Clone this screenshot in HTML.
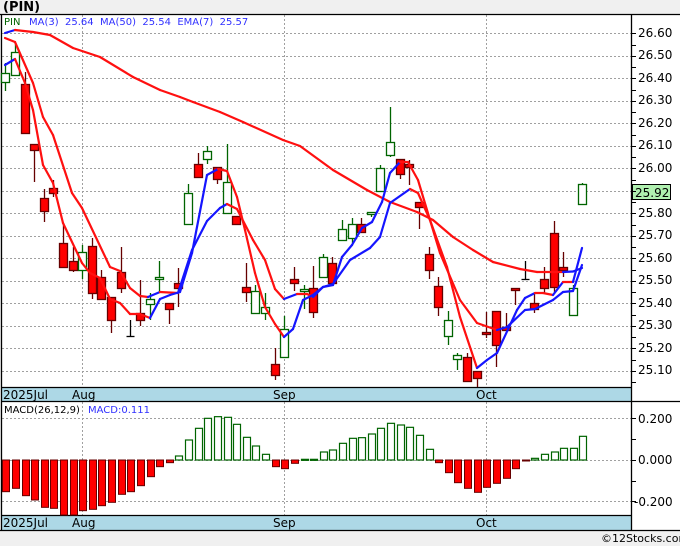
<!DOCTYPE html>
<html><head><meta charset="utf-8">
<style>
html,body{margin:0;padding:0;background:#f0f0f0;width:680px;height:546px;overflow:hidden}
svg{display:block}
text{font-family:"DejaVu Sans","Liberation Sans",sans-serif}
</style></head><body>
<svg id="s" width="680" height="546" xmlns="http://www.w3.org/2000/svg">
<rect x="0" y="0" width="680" height="546" fill="#f0f0f0"/>
<text x="3" y="11" font-size="13" font-weight="bold" fill="#000" font-family="Liberation Sans,sans-serif">(PIN)</text>
<rect x="1" y="14" width="679" height="516" fill="#fff"/>
<g id="grid" stroke="#a0a0a0" stroke-width="1" stroke-dasharray="2,2"></g>
<rect x="1" y="387" width="631" height="14" fill="#add8e6"/>
<rect x="1" y="515" width="631" height="15" fill="#add8e6"/>
<g stroke="#000" stroke-width="1.3">
<line x1="0" y1="14.5" x2="680" y2="14.5"/>
<line x1="1.5" y1="14" x2="1.5" y2="530"/>
<line x1="631.5" y1="14" x2="631.5" y2="530"/>
<line x1="1" y1="387.5" x2="632" y2="387.5"/>
<line x1="1" y1="401.5" x2="680" y2="401.5"/>
<line x1="1" y1="515.5" x2="632" y2="515.5"/>
<line x1="0" y1="530.5" x2="680" y2="530.5"/>
</g>
<g id="plot"></g>
<text x="4" y="25" font-size="10" fill="#006400">PIN</text>
<text x="29" y="25" font-size="10" fill="#3030ff" xml:space="preserve">MA(3)  25.64  MA(50)  25.54  EMA(7)  25.57</text>
<text x="4" y="413" font-size="10" fill="#000">MACD(26,12,9)</text>
<text x="88" y="413" font-size="10" fill="#3030ff">MACD:0.111</text>
<g font-size="12" fill="#000">
<text x="3" y="399">2025Jul</text><text x="72" y="399">Aug</text><text x="273" y="399">Sep</text><text x="476" y="399">Oct</text>
<text x="3" y="527">2025Jul</text><text x="72" y="527">Aug</text><text x="273" y="527">Sep</text><text x="476" y="527">Oct</text>
</g>
<g font-size="12" fill="#000" id="axis">
<text x="638" y="37">26.60</text><text x="638" y="59">26.50</text><text x="638" y="82">26.40</text>
<text x="638" y="104">26.30</text><text x="638" y="127">26.20</text><text x="638" y="149">26.10</text>
<text x="638" y="172">26.00</text><text x="638" y="217">25.80</text>
<text x="638" y="239">25.70</text><text x="638" y="262">25.60</text><text x="638" y="284">25.50</text>
<text x="638" y="307">25.40</text><text x="638" y="329">25.30</text><text x="638" y="352">25.20</text>
<text x="638" y="374">25.10</text>
<text x="638" y="423">0.200</text><text x="638" y="464">0.000</text><text x="634" y="506">-0.200</text>
</g>
<rect x="632.5" y="184.5" width="38" height="15" fill="#b0f0b0" stroke="#000"/>
<text x="635" y="197" font-size="12" fill="#000">25.92</text>
<text x="601" y="542" font-size="11" fill="#000">©12Stocks.com</text>
</svg>
<script>
var NS="http://www.w3.org/2000/svg";
function el(p,t,a){var e=document.createElementNS(NS,t);for(var k in a)e.setAttribute(k,a[k]);p.appendChild(e);return e;}
var g=document.getElementById('grid'),P=document.getElementById('plot'),S=document.getElementById('s');
for(var i=0;i<=15;i++){var y=Math.round(33.3+i*22.5)+.5;el(g,'line',{x1:2,y1:y,x2:631,y2:y});}
[418.5,460.5,501.5].forEach(function(y){el(g,'line',{x1:2,y1:y,x2:631,y2:y});});
[82.5,284.5,486.5].forEach(function(x){el(g,'line',{x1:x,y1:15,x2:x,y2:387});el(g,'line',{x1:x,y1:402,x2:x,y2:515});});
for(var i=0;i<=31;i++){var y=Math.round(33.3+i*11.25)+.5;if(y<387)el(S,'line',{x1:632,y1:y,x2:636,y2:y,stroke:'#000'});}
[418.5,439.5,460.5,481.5,501.5].forEach(function(y){el(S,'line',{x1:632,y1:y,x2:636,y2:y,stroke:'#000'});});
// candles: [o(top body),c(bottom body),hi,lo,color g/r/k]
var C=[[73,82,63,91,'g'],[52,75,43,75,'g'],[84,133,72,133,'r'],[144,150,144,182,'r'],[198,211,189,222,'r'],[188,193,180,197,'r'],[243,267,223,267,'r'],[261,270,247,272,'r'],[252,270,245,279,'g'],[246,293,238,299,'r'],
[277,299,270,299,'r'],[297,320,297,333,'r'],[272,288,247,293,'r'],[336,336,320,336,'k'],[313,320,280,326,'r'],[299,304,293,320,'g'],[277,279,261,292,'g'],[303,309,303,324,'r'],[283,288,268,307,'r'],[193,224,184,224,'g'],
[164,177,153,177,'r'],[151,159,146,164,'g'],[167,179,167,184,'r'],[182,213,144,213,'g'],[216,224,216,224,'r'],[287,292,263,302,'r'],[291,313,285,313,'g'],[307,313,293,320,'g'],[364,375,348,380,'r'],[329,357,316,357,'g'],
[279,283,267,291,'r'],[289,289,285,309,'g'],[288,312,266,318,'r'],[257,277,254,277,'g'],[263,283,257,283,'r'],[229,240,220,240,'g'],[224,238,218,243,'g'],[224,232,218,233,'r'],[212,213,212,217,'g'],[168,191,165,191,'g'],
[142,155,107,157,'g'],[159,174,159,179,'r'],[164,167,160,185,'r'],[202,207,202,229,'r'],[254,270,247,279,'r'],[286,307,277,316,'r'],[320,336,311,345,'g'],[355,359,353,370,'g'],[357,381,353,381,'r'],[371,378,371,387,'r'],
[332,334,312,338,'r'],[311,345,311,367,'r'],[327,330,313,330,'r'],[288,290,288,305,'r'],[279,279,261,279,'k'],[303,309,293,313,'r'],[279,288,267,293,'r'],[233,287,221,293,'r'],[267,270,252,277,'r'],[288,315,285,315,'g'],[184,204,183,204,'g']];
function line(pts){for(var i=1;i<pts.length;i++){var a=pts[i-1],b=pts[i];el(P,'line',{x1:a[0],y1:a[1],x2:b[0],y2:b[1],stroke:b[1]<a[1]-0.3?'#1515ff':'#ff1010','stroke-width':2.2,'stroke-linecap':'round'});}}
var MA50=[[5,33],[15,30],[33,32],[50,35],[73,48],[100,57],[133,77],[160,90],[180,97],[193,102],[220,112],[243,122],[283,140],[300,146],[333,170],[367,190],[390,202],[417,212],[433,220],[453,237],[473,250],[493,262],[520,269],[537,272],[563,272],[573,271.5],[582,268]];
var EMA=[[5,38],[15,42],[33,83],[43,117],[53,135],[72,193],[82,208],[110,267],[120,271],[130,288],[140,296],[148,297],[160,292],[178,293],[192,250],[207,221],[220,208],[227,204],[237,209],[253,240],[265,260],[275,289],[284,299],[297,294],[307,294],[313,297],[323,287],[333,284],[350,260],[370,248],[380,237],[390,203],[410,189],[418,193],[430,220],[440,253],[460,300],[477,323],[497,330],[507,327],[525,310],[535,309],[553,300],[563,292],[573,291],[582,265]];
var MA3=[[5,65],[15,59],[25,83],[33,110],[43,165],[53,183],[63,223],[82,263],[90,273],[100,278],[110,299],[120,303],[130,314],[140,314],[150,318],[160,299],[170,295],[180,292],[192,253],[207,175],[218,169],[227,171],[237,197],[245,230],[255,273],[265,307],[275,324],[284,337],[293,329],[303,300],[313,295],[323,287],[333,285],[342,257],[352,245],[362,228],[372,222],[382,202],[390,173],[400,162],[408,162],[418,180],[430,220],[447,267],[460,317],[477,368],[487,360],[497,353],[517,310],[525,298],[535,293],[543,293],[553,295],[563,282],[573,282],[582,248]];
C.forEach(function(c,i){var x=Math.round(5.3+i*9.62)+.5;var col=c[4]=='g'?'#006400':c[4]=='r'?'#660000':'#000';
el(P,'line',{x1:x,y1:c[2],x2:x,y2:c[3],stroke:col,'stroke-width':1.3});
if(c[4]=='k'){el(P,'line',{x1:x-4,y1:c[0]+.5,x2:x+4,y2:c[0]+.5,stroke:'#000','stroke-width':1.3});}
else{var h=Math.max(c[1]-c[0],2);el(P,'rect',{x:x-4,y:c[0]+.5,width:8,height:h,fill:c[4]=='g'?'#fff':'#f00',stroke:col,'stroke-width':1.3});}});
line(MA50);line(EMA);line(MA3);
var M=[365,355,377,390,412,415,435,435,422,418,407,397,373,365,347,320,290,278,258,210,175,145,140,142,163,202,228,253,290,296,280,268,268,246,240,220,205,203,192,175,160,165,172,196,238,278,308,338,355,367,352,340,325,296,271,265,253,246,235,235,199];
M.forEach(function(v,i){var x=Math.round(5.3+i*9.62)-3+.5;var y=v/3+370;var z=460;
if(v>270){el(P,'rect',{x:x,y:z,width:7,height:Math.max(y-z,1),fill:'#f00',stroke:'#660000','stroke-width':1});}
else{el(P,'rect',{x:x,y:y,width:7,height:Math.max(z-y,1),fill:'#fff',stroke:'#006400','stroke-width':1.2});}});
</script>
</body></html>
